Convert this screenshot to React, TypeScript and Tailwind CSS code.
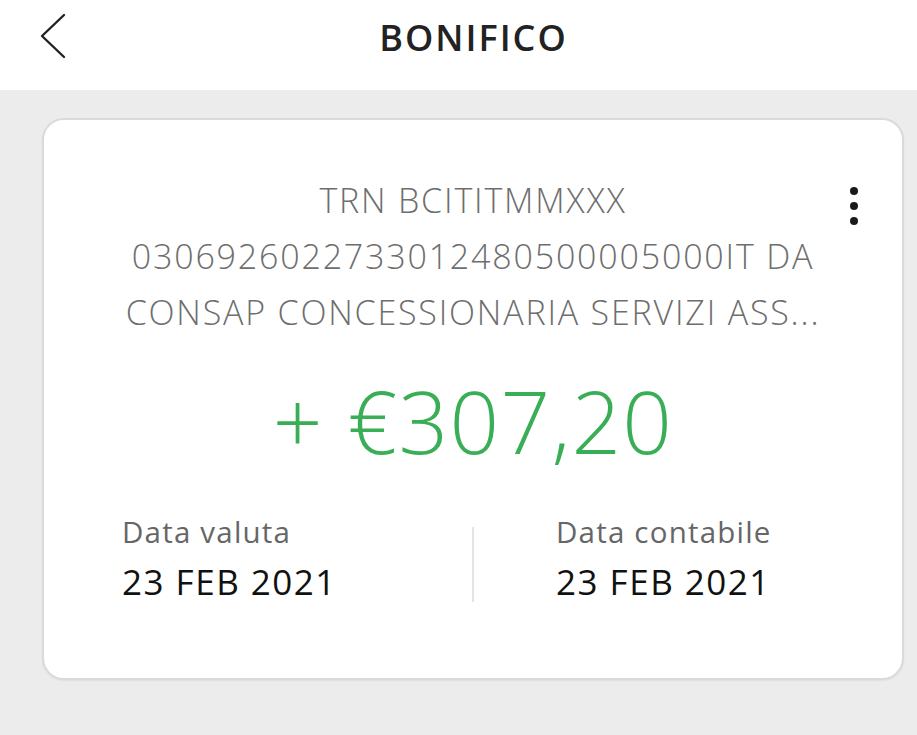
import React from "react";

export default function App() {
  const font = { fontFamily: '"Open Sans", "Noto Sans", sans-serif' };
  return (
    <div className="w-[917px] h-[735px] bg-[#ececec] overflow-hidden" style={font}>
      <header className="h-[90px] bg-white flex items-center relative">
        <button className="absolute left-[38px] top-[13px] w-[30px] h-[46px]">
          <svg viewBox="0 0 30 46" width="30" height="46">
            <path d="M26 2 L4 23 L26 44" fill="none" stroke="#222" strokeWidth="2.4" strokeLinecap="round" strokeLinejoin="round" />
          </svg>
        </button>
        <h1 className="w-full pl-[30px] text-center text-[36px] font-semibold text-[#222] tracking-[2px] -mt-[14px]">BONIFICO</h1>
      </header>
      <div className="pl-[42px] pr-[13px] pt-[28px]">
        <div className="relative h-[562px] bg-white rounded-[22px] border-2 border-[#dadada] shadow-[0_1px_2px_rgba(0,0,0,0.06)] flex flex-col">
          <button className="absolute right-[44px] top-[67px] flex flex-col gap-[7px]">
            <span className="w-[8px] h-[8px] rounded-full bg-[#1a1a1a]" />
            <span className="w-[8px] h-[8px] rounded-full bg-[#1a1a1a]" />
            <span className="w-[8px] h-[8px] rounded-full bg-[#1a1a1a]" />
          </button>
          <div className="pt-[52px] px-[40px] text-center text-[34px] leading-[56px] font-light tracking-[1.8px] text-[#6e6e6e] whitespace-nowrap">
            <div>TRN BCITITMMXXX</div>
            <div>0306926022733012480500005000IT DA</div>
            <div>CONSAP CONCESSIONARIA SERVIZI ASS...</div>
          </div>
          <div className="mt-[30px] text-center text-[87px] leading-[100px] font-light tracking-[1.3px] text-[#3aae57]">+ €307,20</div>
          <div className="mt-[44px] grid grid-cols-[1fr_2px_1fr]">
            <div className="pl-[78px]">
              <div className="text-[29.5px] leading-[36px] tracking-[1.2px] text-[#666]">Data valuta</div>
              <div className="mt-[12px] text-[35px] leading-[40px] tracking-[1.5px] text-[#111]">23 FEB 2021</div>
            </div>
            <div className="mt-[13px] bg-[#e4e4e4]" />
            <div className="pl-[82px]">
              <div className="text-[29.5px] leading-[36px] tracking-[1.2px] text-[#666]">Data contabile</div>
              <div className="mt-[12px] text-[35px] leading-[40px] tracking-[1.5px] text-[#111]">23 FEB 2021</div>
            </div>
          </div>
        </div>
      </div>
    </div>
  );
}
